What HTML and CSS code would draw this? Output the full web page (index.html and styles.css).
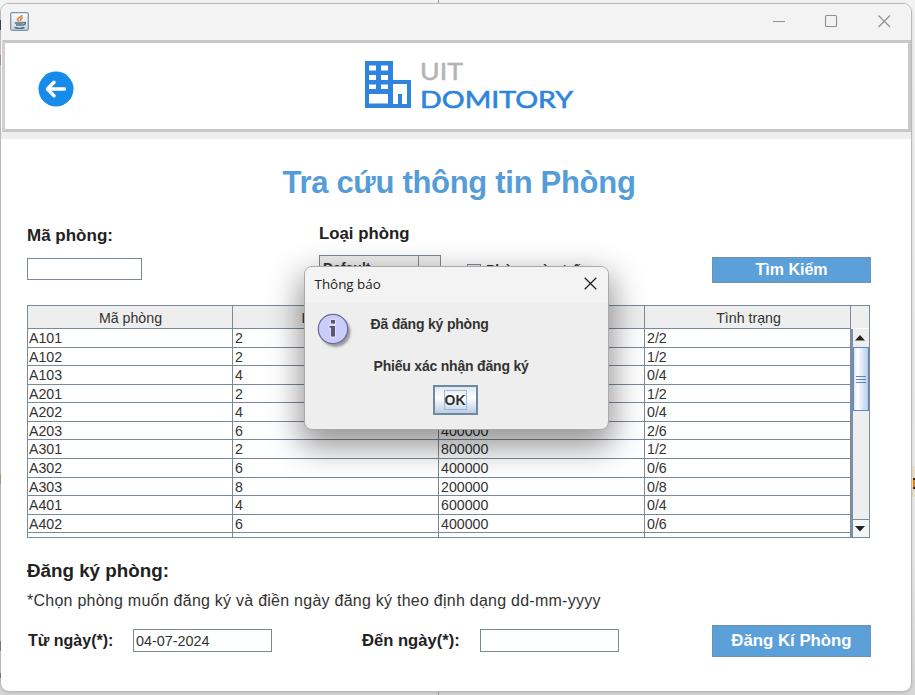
FILE: index.html
```html
<!DOCTYPE html>
<html lang="vi">
<head>
<meta charset="utf-8">
<title>UIT Domitory</title>
<link rel="stylesheet" href="styles.css">
</head>
<body>
<div class="edge edge-top"></div><div class="edge edge-bottom"></div>
<div class="speck s1"></div><div class="speck s2"></div><div class="speck s3"></div><div class="speck s4"></div><div class="speck s5"></div>
<div class="sliver"><i></i></div>
<main class="window">
  <div class="titlebar">
    <svg class="java" viewBox="0 0 19 19"><defs><linearGradient id="jb" x2="0" y2="1"><stop offset="0" stop-color="#fff"/><stop offset="1" stop-color="#c9d6e0"/></linearGradient></defs><rect x=".7" y=".7" width="17.6" height="17.6" rx="1.5" fill="url(#jb)" stroke="#7d93a5" stroke-width="1.3"/><path d="M12 3C12 5 7.500 5.500 7.500 7.500c0 1 .8 1.500 1.200 2.200M12.800 5.500C9.500 7 10.800 8 10.500 9.500" fill="none" stroke="#e58a3c" stroke-width="1.700"/><path d="M4.800 11h8.200M6 13h6.500M13 10.600c3.500-.8 3 2-.3 2.600M4.500 15.500c3 1 7 1 10 0" fill="none" stroke="#4d6f8d" stroke-width="1.400"/></svg>
    <svg class="controls" viewBox="0 0 120 16"><g fill="none" stroke="#8f8f8f" stroke-width="1.1"><path d="M1 8.500h12"/><rect x="53.500" y="2.500" width="11" height="11" rx="1.300"/><path d="M106.500 2.500l11.500 11.500M118 2.500L106.500 14"/></g></svg>
  </div>
  <header class="header">
    <svg class="back" viewBox="0 0 36 36"><circle cx="18" cy="18" r="17.500" fill="#168bea"/><path d="M26.500 18H10M16 11.200L9.400 18l6.600 6.800" fill="none" stroke="#fff" stroke-width="3.400" stroke-linecap="round" stroke-linejoin="round"/></svg>
    <svg class="logo" viewBox="0 0 212 52">
      <path fill="#2f85dd" fill-rule="evenodd" d="M1 1H29V20H47V48H1ZM5 5.500V10.500H12V5.500ZM17 5.500V10.500H24V5.500ZM5 15V20H12V15ZM17 15V20H24V15ZM5 24.500V29H12V24.500ZM17 24.500V29H24V24.500ZM5 34V43.500H24V34ZM29 24V44H34V34H38V44H43V24Z"/>
      <text class="uit" x="56" y="20" textLength="43" lengthAdjust="spacingAndGlyphs">UIT</text>
      <text class="domitory" x="56" y="47.500" textLength="153" lengthAdjust="spacingAndGlyphs">DOMITORY</text>
    </svg>
  </header>
  <div class="strip"></div>
  <section class="content">
    <h1><span>Tra cứu thông tin Phòng</span></h1>
    <div class="search">
      <div class="field code"><label>Mã phòng:</label><div class="input"></div></div>
      <div class="field type"><label>Loại phòng</label><div class="combo"><b>Default</b><i><svg viewBox="0 0 12 7"><path d="M0 0h12L6 6z" fill="#444"/></svg></i></div></div>
      <div class="check"><i></i><b>Phòng còn trống</b></div>
      <div class="button find"><span>Tìm Kiếm</span></div>
    </div>
    <div class="tablebox">
      <div class="grid">
        <div class="row head"><span>Mã phòng</span><span>Loại phòng</span><span></span><span>Tình trạng</span></div>
        <div class="row"><span>A101</span><span>2</span><span></span><span>2/2</span></div>
        <div class="row"><span>A102</span><span>2</span><span></span><span>1/2</span></div>
        <div class="row"><span>A103</span><span>4</span><span></span><span>0/4</span></div>
        <div class="row"><span>A201</span><span>2</span><span></span><span>1/2</span></div>
        <div class="row"><span>A202</span><span>4</span><span></span><span>0/4</span></div>
        <div class="row"><span>A203</span><span>6</span><span>400000</span><span>2/6</span></div>
        <div class="row"><span>A301</span><span>2</span><span>800000</span><span>1/2</span></div>
        <div class="row"><span>A302</span><span>6</span><span>400000</span><span>0/6</span></div>
        <div class="row"><span>A303</span><span>8</span><span>200000</span><span>0/8</span></div>
        <div class="row"><span>A401</span><span>4</span><span>600000</span><span>0/4</span></div>
        <div class="row"><span>A402</span><span>6</span><span>400000</span><span>0/6</span></div>
        <div class="row"><span></span><span></span><span></span><span></span></div>
      </div>
      <div class="scroll">
        <div class="corner"></div>
        <div class="arrow"><svg viewBox="0 0 10 6"><path d="M0 5.500h10L5 0z" fill="#222"/></svg></div>
        <div class="thumb"><i></i><i></i><i></i></div>
        <div class="track"></div>
        <div class="arrow down"><svg viewBox="0 0 10 6"><path d="M0 0h10L5 5.500z" fill="#222"/></svg></div>
      </div>
    </div>
    <h2><span>Đăng ký phòng:</span></h2>
    <p><span>*Chọn phòng muốn đăng ký và điền ngày đăng ký theo định dạng dd-mm-yyyy</span></p>
    <div class="register">
      <label class="from">Từ ngày(*):</label><div class="input date">04-07-2024</div>
      <label class="to">Đến ngày(*):</label><div class="input date"></div>
      <div class="button reg"><span>Đăng Kí Phòng</span></div>
    </div>
  </section>
</main>
<div class="dialog">
  <div class="dtitle"><span>Thông báo</span><svg viewBox="0 0 13 13"><path d="M.7.700l11.600 11.600M12.300.7L.7 12.300" stroke="#222" stroke-width="1.300"/></svg></div>
  <div class="dbody">
    <svg class="info" viewBox="0 0 38 38"><defs><filter id="s" x="-20%" y="-20%" width="150%" height="150%"><feGaussianBlur stdDeviation="1.300"/></filter></defs><circle cx="19.500" cy="20" r="15" fill="#777" opacity=".7" filter="url(#s)"/><circle cx="17" cy="17" r="14.700" fill="#ccccfb" stroke="#6c6c9c" stroke-width="1.300"/><path d="M14.500 7.500h5v4.500h-5zM13 13.500h6.500v11.500h-5v-9h-1.500z" fill="#55557f" stroke="#f4f4ff" stroke-width=".8"/></svg>
    <div class="msgs"><b class="m1">Đã đăng ký phòng</b><b class="m2">Phiếu xác nhận đăng ký</b></div>
    <div class="ok"><span>OK</span></div>
  </div>
</div>
</body>
</html>
```
FILE: styles.css
```css
* { box-sizing: border-box; }
body { margin: 0; width: 915px; height: 695px; overflow: hidden; padding: 3px 0 0 0; background: linear-gradient(#f2f2f2, #e8e8e8 80%, #d6d6d6); font-family: "Liberation Sans", Arial, sans-serif; color: #333; position: relative; }
.edge { position: absolute; left: 438px; width: 1px; height: 4px; background: #999; }
.edge-top { top: 0; } .edge-bottom { bottom: 0; }
.speck { position: absolute; left: 0; width: 1px; height: 10px; background: #777; z-index: 2; }
.s1 { top: 20px; background: #345; } .s2 { top: 55px; background: #a88; } .s3 { top: 474px; background: #997; } .s4 { top: 641px; } .s5 { top: 673px; height: 5px; }
.sliver { position: absolute; left: 911px; top: 466px; width: 4px; height: 31px; padding: 12px 0 0 2px; background: #e8e0cc; }
.sliver i { display: block; width: 2px; height: 11px; border: solid #3a2410; border-width: 2px 0 2px 0; background: #d98a20; }
.window { width: 912px; height: 689px; border: 1px solid #b9b9b9; border-radius: 9px; background: #fff; overflow: hidden; position: relative; box-shadow: 0 1px 3px #0002; }
.titlebar { height: 36px; background: #f3f3f3; display: flex; justify-content: space-between; padding: 7px 19px 0 9px; }
.java { width: 19px; height: 19px; margin-top: 1px; }
.controls { width: 120px; height: 16px; margin-top: 1.500px; }
.header { height: 92px; border: 3px solid #c8c8c8; border-left-color: #d0d0d0; display: flex; margin: 0 0 0 1px; padding: 0 0 0 33px; }
.back { width: 36px; height: 36px; margin-top: 28px; }
.logo { width: 212px; height: 52px; margin: 17px 0 0 290px; overflow: visible; }
.logo text { font-family: Lato, sans-serif; }
.uit { font-size: 23.500px; fill: #b4b4b4; stroke: #b4b4b4; stroke-width: .5px; }
.domitory { font-size: 23.500px; fill: #2f85dd; stroke: #2f85dd; stroke-width: .6px; }
.strip { height: 7px; background: #eee; }
.content { padding: 0 26px; }
h1 { margin: 0; height: 84px; padding: 26px 0 0 6px; text-align: center; font-size: 31px; letter-spacing: -.3px; line-height: 36px; color: #549dd9; }
.search { display: flex; height: 82px; }
.field label { display: block; font-size: 16.800px; line-height: 20px; font-weight: bold; white-space: nowrap; color: #222; }
.code { width: 292px; padding-top: 3px; }
.input { border: 1px solid #7a8a99; background: #fff; }
.code .input { width: 115px; height: 22px; margin-top: 12px; }
.code label { font-size: 17px; }
.type { width: 148px; padding-top: 1px; }
.combo { width: 122px; height: 28px; margin-top: 11px; border: 1px solid #7a8a99; display: flex; background: #eee; }
.combo b { width: 99px; border-right: 1px solid #7a8a99; font-size: 14px; line-height: 25px; padding-left: 3px; }
.combo i { display: flex; flex: 1; align-items: center; justify-content: center; }
.combo svg { width: 12px; height: 7px; }
.check { width: 245px; padding-top: 35px; display: flex; font-size: 14px; line-height: 24px; white-space: nowrap; }
.check i { width: 14px; height: 14px; border: 1px solid #7a8a99; margin: 6px 5px 0 0; background: #eee; }
.button { width: 159px; background: #5ba0d9; border: 1px solid #7292ad; color: #fff; font-weight: bold; text-align: center; }
.find { height: 26px; line-height: 24px; margin-top: 34px; font-size: 16px; }
.tablebox { width: 843px; height: 233px; border: 1px solid #7a8a99; display: flex; overflow: hidden; }
.grid { width: 823px; }
.row { display: grid; grid-template-columns: 205px 206px 206px 206px; height: 18.580px; font-size: 14.200px; line-height: 18px; }
.row span { border-right: 1px solid #7a8a99; border-bottom: 1px solid #7a8a99; padding-left: 1px; overflow: hidden; }
.row span + span { padding-left: 2px; }
.row.head { height: 23px; line-height: 24px; text-align: center; background: #eee; }
.scroll { flex: 1; border-left: 2px solid #7a8fa8; display: flex; flex-direction: column; background: #eee; }
.corner { height: 23px; border-bottom: 1px solid #fff; margin-left: -2px; background: #eee; }
.arrow { height: 18px; display: flex; align-items: center; padding-left: 2px; }
.arrow svg { width: 10px; height: 6px; }
.thumb { height: 64px; border: 1px solid #6382bf; background: linear-gradient(90deg, #d8e6f3, #fff 25%, #b5cfe9); display: flex; flex-direction: column; align-items: center; justify-content: center; gap: 2px; }
.thumb i { width: 10px; height: 1px; background: #6382bf; }
.track { flex: 1; }
.down { border-top: 1px solid #7a8a99; background: #f5f5f5; }
h2 { margin: 0; padding-top: 21px; height: 51px; font-size: 18.800px; line-height: 24px; color: #222; }
p { margin: 0; height: 36px; font-size: 16px; letter-spacing: .25px; line-height: 24px; white-space: nowrap; }
.register { display: flex; height: 40px; }
.register label { font-size: 16px; line-height: 32px; font-weight: bold; color: #222; white-space: nowrap; }
.from { width: 106px; padding-left: 1px; } .register .to { width: 118px; font-size: 16.600px; }
.date { width: 139px; height: 23px; margin: 3.500px 0 0; font-size: 14.400px; line-height: 23px; padding-left: 2px; }
.from + .date { margin-right: 90px; }
.reg { height: 32px; line-height: 29px; margin: 0 0 0 93px; font-size: 16.800px; }
.dialog { position: absolute; left: 303.500px; top: 266px; width: 305px; height: 164px; border: 1px solid #aaa; border-radius: 8px; background: #eee; box-shadow: 0 13px 32px 4px rgba(0,0,0,.42); overflow: hidden; }
.dtitle { height: 35px; background: #f3f3f3; display: flex; justify-content: space-between; padding: 10px 10.500px 0 10px; font-family: "Open Sans", sans-serif; font-size: 13.400px; line-height: 14px; color: #222; }
.dtitle svg { width: 13px; height: 13px; }
.dbody { display: grid; grid-template-columns: 66px 1fr; padding-left: 11px; }
.info { width: 38px; height: 38px; margin-top: 10px; }
.msgs { display: flex; flex-direction: column; font-size: 14px; letter-spacing: -.2px; line-height: 18px; height: 83px; white-space: nowrap; }
.m1 { margin: 13px 0 24px -11px; } .m2 { margin-left: -8px; }
.ok { grid-column: 1 / 3; width: 45px; height: 30px; margin: 0 0 0 117px; border: 2px solid #7088a0; background: linear-gradient(#dce8f2, #fff 40%, #b8cfe5); display: flex; align-items: center; justify-content: center; font-size: 14px; font-weight: bold; }
.ok span { border: 1px solid #9dbbd8; line-height: 18px; }
```
